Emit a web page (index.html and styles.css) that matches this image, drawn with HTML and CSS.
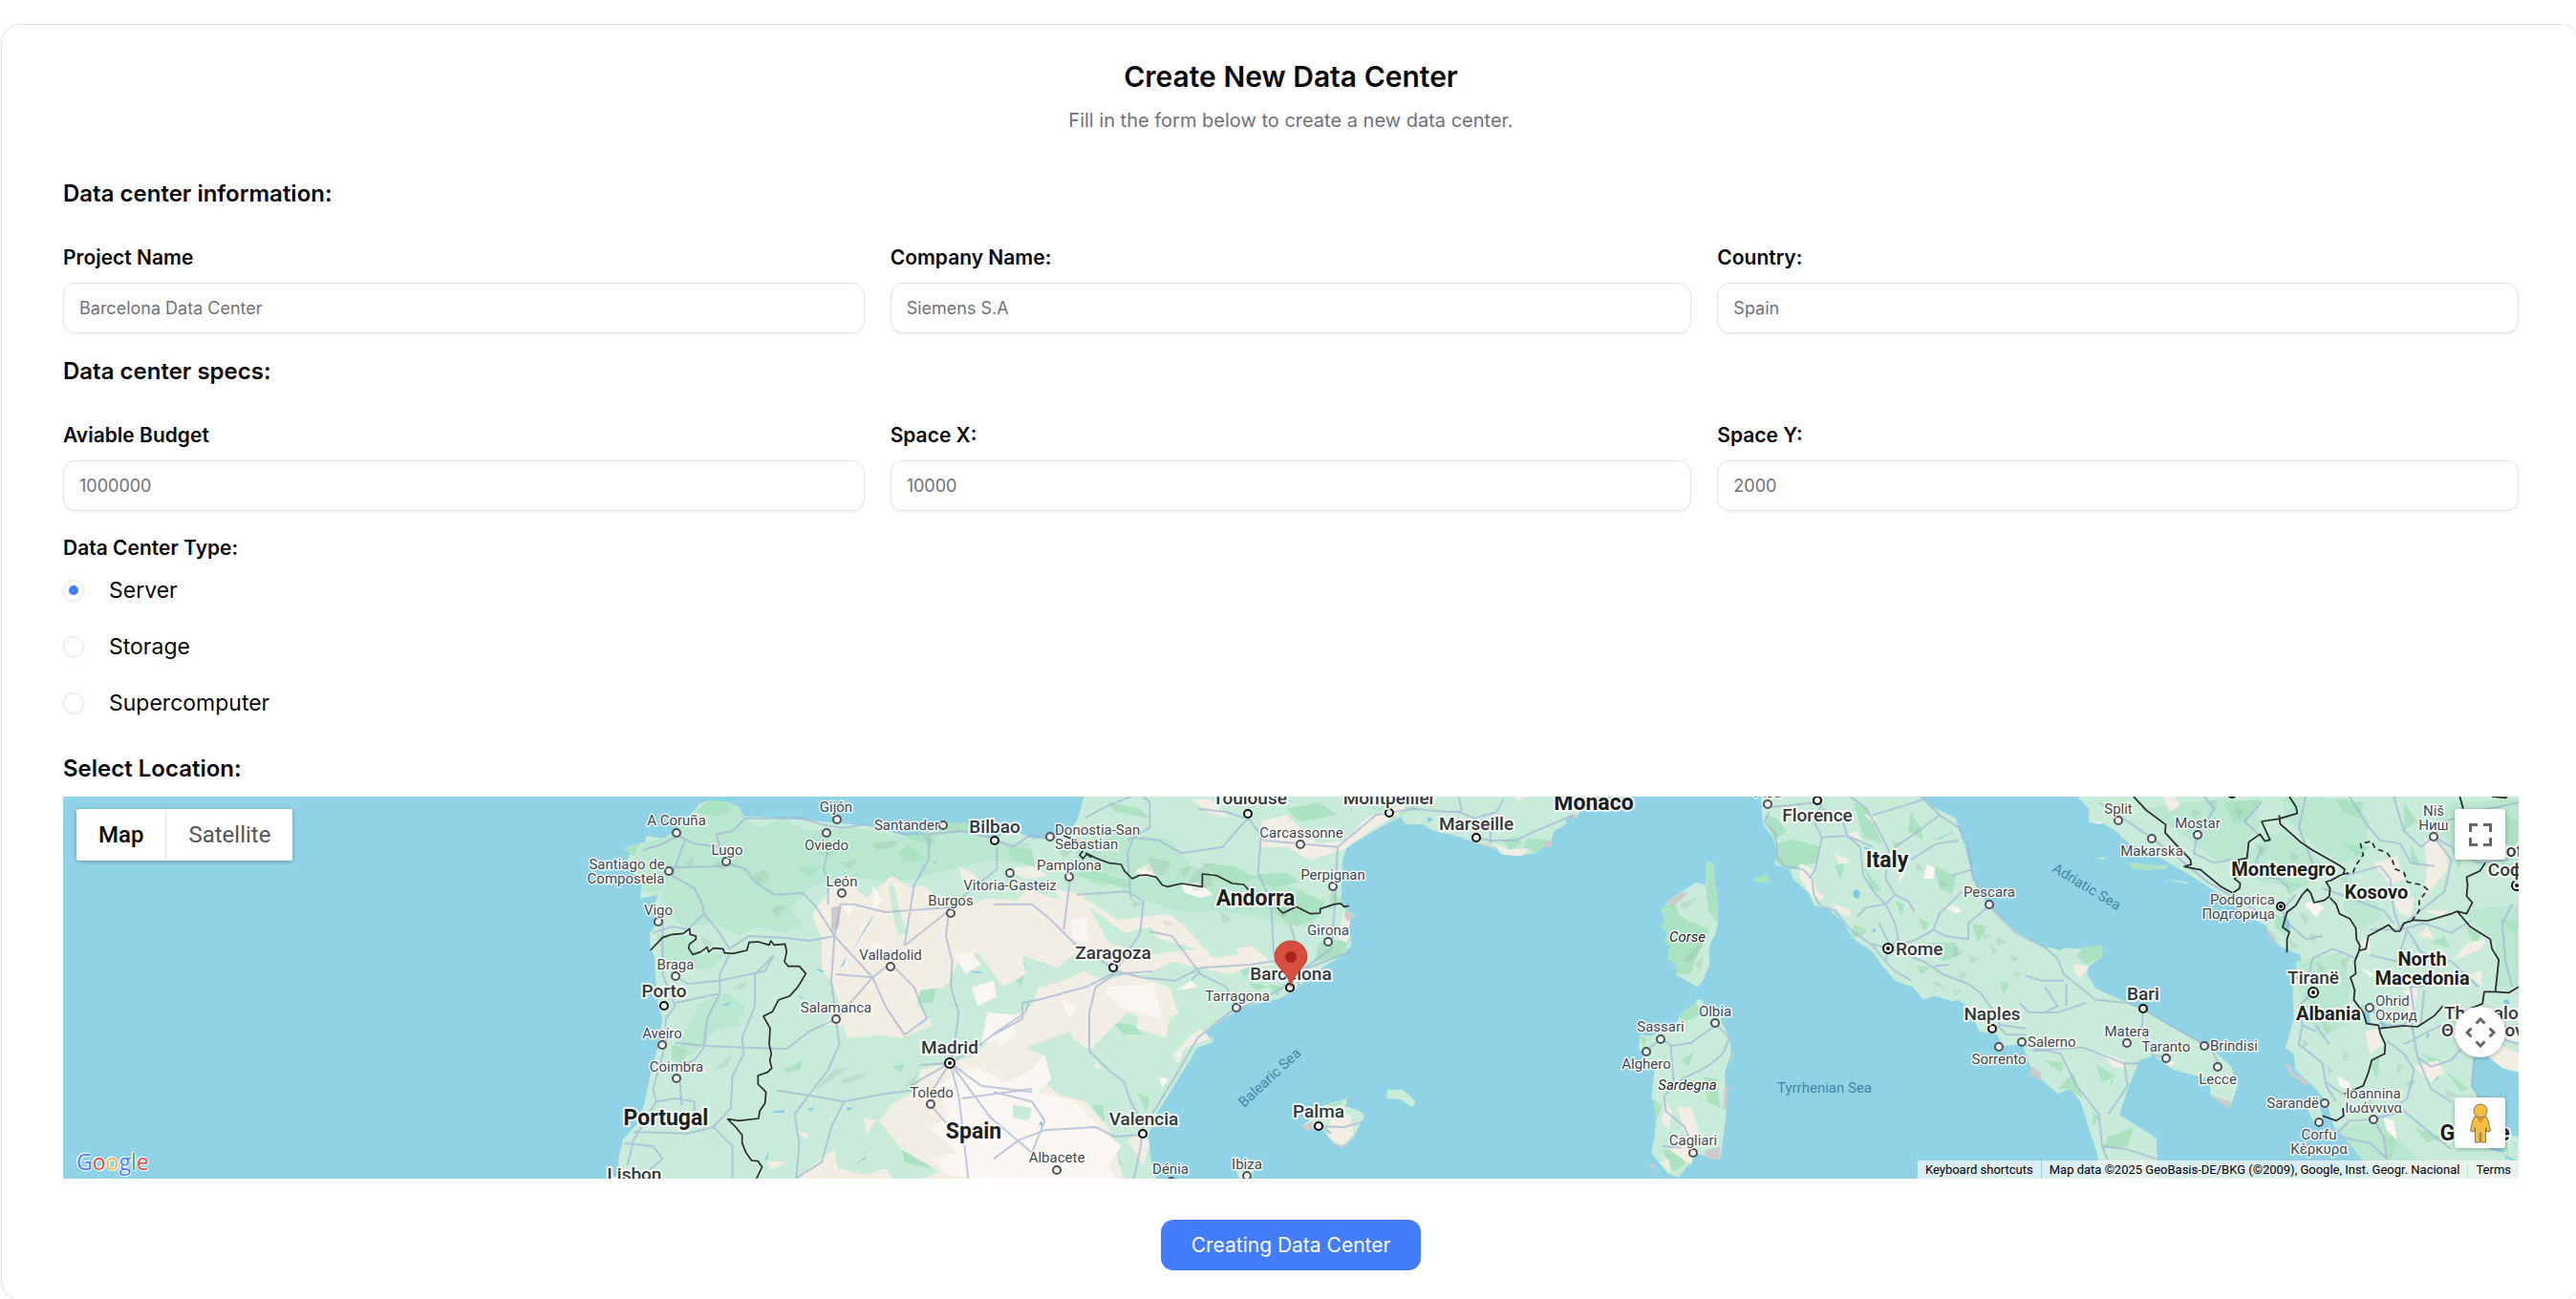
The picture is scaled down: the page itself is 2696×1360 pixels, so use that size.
FILE: index.html
```html
<!DOCTYPE html>
<html lang="en">
<head>
<meta charset="utf-8">
<meta name="viewport" content="width=device-width, initial-scale=1">
<title>Create New Data Center</title>
<link rel="stylesheet" href="styles.css">
</head>
<body>
<main class="card">
  <header class="card-header">
    <h1 class="title">Create New Data Center</h1>
    <p class="subtitle">Fill in the form below to create a new data center.</p>
  </header>
  <form class="form">
    <h2 class="section-title">Data center information:</h2>
    <div class="fields">
      <div class="field"><label class="label" for="project">Project Name</label><input class="input" id="project" type="text" placeholder="Barcelona Data Center"></div>
      <div class="field"><label class="label" for="company">Company Name:</label><input class="input" id="company" type="text" placeholder="Siemens S.A"></div>
      <div class="field"><label class="label" for="country">Country:</label><input class="input" id="country" type="text" placeholder="Spain"></div>
    </div>
    <h2 class="section-title">Data center specs:</h2>
    <div class="fields">
      <div class="field"><label class="label" for="budget">Aviable Budget</label><input class="input" id="budget" type="text" placeholder="1000000"></div>
      <div class="field"><label class="label" for="spacex">Space X:</label><input class="input" id="spacex" type="text" placeholder="10000"></div>
      <div class="field"><label class="label" for="spacey">Space Y:</label><input class="input" id="spacey" type="text" placeholder="2000"></div>
    </div>
    <fieldset class="types">
      <legend class="label">Data Center Type:</legend>
      <div class="type-list">
        <label class="type"><input class="radio" type="radio" name="type" checked>Server</label>
        <label class="type"><input class="radio" type="radio" name="type">Storage</label>
        <label class="type"><input class="radio" type="radio" name="type">Supercomputer</label>
      </div>
    </fieldset>
    <h2 class="section-title map-title">Select Location:</h2>
    <div class="map">
      <svg class="map-canvas" viewBox="66 834 2570 400" preserveAspectRatio="xMidYMid slice" role="img" aria-label="Map of the western Mediterranean">
        <!-- Iberia and southern France -->
        <g transform="translate(560 820) scale(.33333)">
          <path class="land" d="M262 1250V1180L275 1120 320 1070 345 1000 365 900 385 830 400 740 385 690 378 600 375 540 362 525 360 470 385 440 370 400 385 350 330 362 335 320 290 240 305 205 275 205 345 185 350 165 400 175 440 150 500 85 515 65 545 55 560 68 600 58 640 75 655 105 700 105 840 115 950 125 1060 135 1160 165 1240 155 1300 125 1350 140 1440 175 1500 145 1560 175 1620 170 1680 150 1705 110 1723 42V0H3300L3275 100 3240 105 3235 130 3200 150 3190 180 3140 220 3080 228 3030 220 3020 205 2950 185 2890 165 2820 150 2790 130 2730 128 2720 105 2660 135 2550 200 2535 240 2530 380 2550 400 2575 415 2555 435 2562 510 2530 545 2470 580 2390 645 2340 675 2220 705 2160 740 2100 790 2130 800 2125 815 2080 830 2050 880 2000 960 1950 1040 1925 1110 1935 1190 1955 1250Z"/>
          <path class="hill" d="M500 85 545 55 600 58 640 75 655 105 700 140 780 110 850 150 1000 140 1160 170 1300 130 1440 180 1550 190 1570 260 1440 240 1300 270 1200 300 1100 310 960 290 860 330 800 400 840 440 780 470 690 450 640 480 560 440 480 450 420 420 400 340 340 345 310 240 340 190 440 160ZM600 660 660 700 640 760 570 770 500 850 440 870 470 780 520 690ZM380 470 480 480 520 540 600 530 560 580 470 590 400 560ZM1800 140 2000 180 2060 260 2240 300 2400 330 2470 390 2440 450 2330 440 2260 420 2130 400 2010 400 1850 340 1780 240ZM1700 200 1800 220 1850 290 1780 330 1690 280ZM2600 60 2720 42 2760 80 2690 120ZM1430 390 1540 370 1560 470 1430 500Z"/>
          <path class="wood" d="M505 90 545 55 600 60 620 90 560 105ZM275 205 330 190 310 230ZM1160 165 1230 160 1250 180 1190 185ZM1290 130 1350 120 1380 150 1300 150ZM1480 200 1560 210 1570 260 1500 240ZM1350 420 1430 395 1510 400 1560 380V420L1500 430 1450 520 1400 510 1430 460ZM1480 580 1540 560 1530 620 1500 600ZM1550 970 1580 980 1580 1010 1555 1010ZM780 900 840 870 830 900 790 910ZM1120 890 1160 880 1150 910ZM1150 1140 1230 1180 1240 1210 1160 1190ZM1180 650 1260 640 1250 690 1190 690ZM860 170 950 190 930 230 880 215ZM1170 190 1230 240 1160 250 1140 220ZM820 270 900 260 860 290ZM430 820 480 840 460 880 430 870ZM1440 480 1490 470 1520 500 1450 520ZM1490 565 1540 570 1530 640 1500 610ZM1600 510 1640 500 1630 540ZM1700 640 1780 680 1770 700 1690 670ZM1810 750 1880 760 1910 790 1850 790ZM1750 1010 1780 1010 1790 1060 1750 1060ZM1660 1070 1710 1050 1710 1110 1680 1120ZM1890 970 1930 990 1920 1030ZM1810 1150 1840 1190 1820 1230ZM2360 80 2460 60 2520 100 2400 120ZM2090 250 2200 260 2260 300 2180 320ZM2300 390 2400 340 2480 370 2460 420 2390 450ZM2500 340 2540 370 2490 400ZM2240 290 2360 280 2400 310 2320 330ZM2460 500 2560 490 2530 545 2450 560ZM3040 180 3080 165 3100 190 3060 210ZM3120 170 3180 180 3140 220 3100 200ZM2240 620 2300 640 2260 650ZM2190 560 2250 580 2230 610ZM2300 630 2350 640 2330 670ZM1740 270 1870 310 1860 330 1700 290ZM1800 60 1900 80 1930 110 1820 90ZM2740 50 2780 60 2760 90Z"/>
          <path class="plain" d="M870 410 900 370 960 290 1040 360 1120 290 1180 330 1220 320 1300 400 1430 360 1510 370 1550 330 1620 360 1740 370 1830 430 1990 410 2040 450 2130 550 2240 530 2290 560 2180 600 2090 580 2000 560 1920 600 1850 600 1800 560 1700 530 1640 580 1530 540 1540 600 1470 640 1390 530 1330 560 1290 640 1210 650 1200 700 1250 760 1150 800 1080 790 980 800 970 760 900 760 960 700 930 620 900 590 900 490 880 440ZM1330 260 1370 280 1420 330 1350 340ZM1120 1010 1200 960 1210 900 1300 880 1370 860 1440 800 1500 730 1560 700 1580 640 1660 620 1720 590 1790 620 1870 600 1990 640 2020 720 1960 760 1860 720 1790 790 1740 840 1780 900 1720 880 1680 780 1620 800 1540 830 1600 860 1600 940 1650 980 1730 1000 1800 1080 1850 1250H1680L1600 1180 1430 1200 1400 1250H1200L1270 1220 1150 1150 1080 1060ZM1840 600 1920 610 1900 660 1860 640ZM820 1250 870 1200 940 1150 950 1210 1040 1230 1100 1210 1130 1250ZM1030 1050 1070 1060 1040 1100ZM820 1090 860 1100 850 1120ZM730 1185 790 1190 740 1215ZM2090 770 2120 800 2040 830 2020 880 2000 860 2050 800ZM1900 1090 1930 1130 1910 1200 1860 1120ZM2280 120 2360 100 2400 140 2460 190 2540 180 2610 110 2730 60V85L2620 150 2540 210 2430 240 2360 200 2280 200ZM2060 50 2120 50 2180 110 2110 90ZM2540 400 2560 430 2550 500 2520 490ZM2200 520 2250 510 2320 570 2250 580ZM1880 280 1930 250 1950 300ZM3010 190 3060 210 3120 205 3100 228 3040 225ZM1480 270 1560 260 1610 290 1540 300ZM1620 330 1720 350 1740 400 1680 390ZM1900 640 2000 700 1980 800 1890 770ZM3080 42H3110L3085 60Z"/>
          <path class="dry" d="M1320 540 1370 530 1400 570 1350 600ZM1370 640 1440 620 1450 670 1390 700ZM1420 720 1520 730 1480 800 1400 820ZM1290 930 1380 890 1480 940 1560 900 1600 850 1620 930 1580 970 1700 1000 1770 1080 1840 1140 1800 1200 1830 1250H1430L1300 1230 1240 1180 1330 1160 1240 1090 1300 1040 1260 960ZM1800 640 1940 630 1970 740 1850 710 1790 660ZM1680 430 1730 420 1740 500 1690 490ZM960 380 1000 370 990 420ZM1060 320 1090 370 1060 400ZM1040 520 1070 500 1110 520 1080 560ZM1440 780 1500 730 1510 790 1460 830ZM1650 680 1700 700 1680 740ZM2030 320 2080 310 2130 350 2090 360 2040 345ZM1960 920 1990 930 1970 955ZM1890 270 1930 280 1900 300ZM2010 650 2060 620 2080 640Z"/>
          <path class="land" d="M1110 310 1130 330 1150 420 1170 470 1140 480 1120 400ZM1280 620 1320 660 1300 690ZM1740 390 1850 470 1930 450 1960 490 2080 520 2000 530 1920 540 1800 500ZM1670 790 1770 860 1740 920 1700 870ZM1560 580 1640 600 1600 640 1560 620ZM1500 1010 1560 1020 1550 1060 1500 1050Z"/>
          <path class="rock" d="M930 390 960 385 955 450 930 470ZM2545 400 2575 415 2555 435 2540 420ZM2640 100 2650 98ZM2950 185 3020 203 3015 208 2950 190ZM3170 182 3192 178 3192 200 3168 202ZM3245 100H3275V108H3240Z"/>
          <path class="shade" d="M560 250 600 240 640 260 580 270ZM680 290 720 270 740 300 700 320ZM890 160 920 190 900 215ZM1060 190 1140 180 1130 200 1070 210ZM740 400 760 380 790 390 760 420ZM960 930 1040 910 1030 925 970 945ZM880 960 940 900 990 890 900 950ZM560 900 620 850 600 890ZM1930 230 2000 250 1970 290 1920 270ZM2050 300 2110 250 2130 320 2070 340ZM2250 330 2310 350 2290 380ZM2020 270 2060 260 2040 300ZM2150 400 2190 430 2160 440ZM2330 400 2380 390 2350 430ZM960 250 1010 240 990 270ZM520 480 560 500 540 530ZM470 250 500 230 490 270ZM620 640 670 620 650 650ZM1640 200 1690 210 1660 240ZM1870 360 1910 380 1880 390ZM1970 430 2010 440 1980 450ZM1160 950 1210 900 1180 960ZM920 180 970 200 940 220ZM1220 160 1260 190 1230 200Z"/>
          <path class="lake" d="M995 525 1065 408 1050 440 1000 520ZM955 583 978 545 970 570ZM875 580 910 590 900 595ZM1250 245 1265 248 1252 252ZM735 1035 780 1025 785 1035ZM720 1185 735 1155 730 1180ZM1000 1200 1035 1175 1037 1155V1180ZM855 1022 880 1018 865 1030ZM975 1020 1000 1018 985 1028ZM585 697 620 685 600 700ZM470 712 495 685ZM1360 590 1410 592 1390 597ZM830 665 845 680 832 675ZM2800 105 2820 115 2805 122ZM1580 1075 1590 1060 1595 1075Z"/>
          <path class="road" d="M340 210 400 190 450 165 500 190 580 200 570 160 620 150 660 110 840 110 900 130 960 140 1040 130 1160 160 1240 160 1340 150 1440 175 1500 200 1560 160 1620 180 1660 140M470 180 430 290 500 330 525 380 530 410 580 470 610 520 670 480 780 485 860 495 940 480 960 380 1000 380 1100 405 1300 390 1450 270 1450 200M600 250 660 270 690 310 750 350 840 345 880 385 940 480 1060 610 1110 570M430 265 600 260M920 210 905 270 920 300V380M940 480 930 620 945 740M1240 160 1235 240 1190 320 1160 510M1300 400 1160 510M1300 400 1290 480 1310 560 1305 640 1330 720 1320 800 1303 878M1060 610 945 740 860 780 790 835 660 830 540 825 440 815M1060 610 1100 700 1160 790 1230 740 1190 640 1120 570M945 740 955 820 920 900 860 980 815 1040 830 1130 820 1242M945 600 1060 610M400 420V600L440 700 410 740 410 820 370 960 380 1000 310 1120 290 1200M370 470 430 450 480 460 530 410M430 600 480 630 580 620 720 590 750 540M440 690 580 660 580 600 610 540M750 540 690 600 690 700 650 800 655 850 620 920 615 1020 560 1080 480 1100 310 1095M580 660 540 740 530 830 500 870 430 900M380 1000 440 990 500 1000 500 1050M455 940 460 1010M280 1130 370 1140 400 1180 330 1240M560 1080 620 1140 620 1240M860 980 970 1000 1100 975 1180 965M760 965 860 980M970 1000 930 1080 900 1190 820 1240M1303 878 1230 920 1180 950M1303 878 1400 820 1450 780 1540 720 1550 690M1303 878 1400 950 1560 970M1303 878 1250 960M1303 878 1210 885M1303 878 1330 980 1360 1240M1303 878 1430 1050 1560 1160 1600 1060 1560 1000 1440 970M1340 990 1560 960M1240 1010 1320 1100M1440 1180 1520 1120 1600 1090 1760 1080 1820 1110 1900 1105M1940 590 1820 600 1760 640 1740 720 1740 840 1800 900 1850 940 1870 1000 1910 1070 1900 1150 1880 1242M1440 380 1560 380 1620 430 1700 510 1830 590 1900 610 2010 620 2090 580 2240 570 2400 550M1680 300 1660 460M1830 580 1900 470 1910 370 1860 340 1700 350M1830 590 1730 640 1580 680 1530 690 1530 740 1440 790M1930 465 2000 480 2060 560 2090 600 2170 640 2200 700M2090 590 2060 620M2560 530 2400 590 2350 640 2280 680 2180 720 2080 800 2040 870 1950 1020 1910 1080M2400 640 2390 600 2500 520 2510 400 2520 200 2400 190 2290 180 2240 110 2210 140 2160 200 2030 220 1960 180 1880 170 1860 220 1870 360M1725 110 1800 70 1900 30 1930 60 1930 140 1860 180M2230 110 2170 90 2080 80M2280 160 2270 280 2310 370 2320 540M2370 440 2400 540M2520 200 2640 100 2760 80 2860 90 2900 90 2950 110 3020 90 3040 50M2910 90 2900 42M2955 170 3000 180 3080 180 3140 150 3190 130 3260 100M3000 120 3000 190"/>
          <path class="border" d="M362 525 400 485 430 475 465 472 485 457 487 475 505 480V490L485 505 482 518 495 538 520 530 540 515 545 530 560 518 590 520 595 533 620 535 665 525 672 500 700 498 735 508 740 495 750 508 785 505 790 530 783 560 795 575 830 575 850 598 825 640 800 668 765 680 745 718 717 732 738 770 735 820 742 850 737 870 743 895 730 908 700 918V945L725 970 722 1005 705 1030 702 1053 640 1060 605 1055 630 1080 650 1105V1130L662 1160 680 1185 700 1187 713 1205 695 1242"/>
          <path class="border" d="M1660 165 1700 180M1720 212 1710 225 1720 237 1733 222 1745 232 1730 220 1760 235 1800 250 1840 255 1850 275 1875 300 1895 290 1920 288 1950 295 1970 320 1985 325 2030 315 2095 325V285L2140 290 2190 315 2225 318 2240 335M2330 390 2348 408 2375 395 2390 388 2435 410 2465 408V395L2510 380 2530 378 2540 388 2555 385"/>
        </g>
        <!-- Balearic islands -->
        <g transform="translate(1040 820) scale(.33333)">
          <path class="land" d="M965 1080 1040 1010 1110 990 1105 1015 1150 1030 1165 1045 1130 1110 1095 1145 1065 1130 1035 1090 1000 1090ZM1235 962H1285L1325 1000 1315 1018 1275 993 1235 990ZM760 1215 820 1210 810 1242H770Z"/>
          <path class="plain" d="M1060 1050 1120 1040 1130 1100 1095 1140 1050 1110ZM770 1225 810 1215 800 1242H780Z"/>
          <path class="wood" d="M1040 1015 1100 993 1060 1030ZM675 795 692 800 690 815Z"/>
          <path class="rock" d="M965 1080 1000 1060 1010 1090 990 1092ZM1065 1130 1095 1148 1125 1120 1095 1138Z"/>
          <path class="road" d="M1030 1078 1100 1080 1155 1065M1030 1080 1060 1100"/>
        </g>
        <!-- Corsica, Sardinia and Italy -->
        <g transform="translate(1660 820) scale(.33333)">
          <path class="land" d="M380 245 400 250 403 310 415 370 412 450 385 520 388 570 365 620 350 640 280 600 285 575 255 550 265 510 245 505 255 470 235 450 250 430 235 400 270 360 345 312 375 320ZM345 680H365L370 700 420 720 425 750 450 800 455 850 435 910 440 1030 430 1120 420 1180 330 1160 320 1200 290 1238 255 1225 205 1160 215 1110 220 1040 230 1010 205 990 215 900 190 870 165 830 170 790 200 795 280 760 300 720 345 705Z"/>
          <path class="land" d="M548 30 555 125 590 180 600 225 590 255 640 270 650 300 700 345 715 385 760 395 810 440 835 485 900 530 920 560 970 620 1025 640 1060 680 1095 668 1150 685 1170 680 1205 710 1235 780 1290 790 1310 825 1370 820 1395 890 1430 930 1480 975 1520 960 1552 1000 1600 1150 1610 1185 1605 1250H1796L1791 1115 1727 1075 1674 1040 1701 960 1738 870 1780 855 1844 900 1956 930 1961 980 2020 1022 2046 950 2025 890 1961 830 1855 775 1749 710 1600 645 1573 600 1578 575 1621 545 1610 510 1550 520 1440 515 1350 465 1265 385 1215 300 1190 200 1160 110 1090 75 1040 30Z"/>
          <path class="wood" d="M380 245 400 250 403 310 415 370 412 440 385 400 375 340ZM250 380 290 380 320 430 390 460 340 560 330 600 280 600 285 575 255 550 265 510 245 505 255 470 235 450 250 430 235 400ZM520 300 570 285 577 315 530 308ZM300 720 345 690 370 720 290 760ZM370 920 410 930 420 1020 380 1000ZM210 1000 240 1010 220 1060ZM240 1150 305 1160 310 1200 270 1220ZM300 870 340 845 320 890ZM600 190 650 175 700 190 735 200 720 250 640 270 595 250ZM560 100 600 110 630 150 590 180ZM840 440 880 460 870 480 830 485ZM780 260 810 250 800 305ZM870 260 930 340 900 340ZM840 60 880 80 930 190 870 170ZM1090 260 1160 290 1150 350 1110 330ZM1020 90 1050 140 1060 180 1010 150ZM1070 500 1160 500 1170 540 1120 560ZM1040 420 1080 440 1060 465ZM1040 570 1080 580 1050 600ZM1210 440 1260 450 1230 500ZM1300 620 1330 630 1310 665ZM970 370 1000 380 990 420ZM1480 960 1530 910 1560 990 1510 960ZM1440 870 1500 880 1490 910ZM1560 515 1621 510 1621 545 1570 570 1540 540ZM1590 1030 1610 1050 1590 1080ZM1640 1110 1720 1080 1700 1140 1620 1150ZM1600 880 1660 920 1620 940ZM165 790 190 800 180 830Z"/>
          <path class="land" d="M280 360 340 330 380 340 370 400 330 440 290 410ZM385 450 412 440 405 480 380 500ZM320 600 370 580 360 630Z"/>
          <path class="plain" d="M250 1005 270 1030 260 1090 235 1060ZM285 1015 330 1020 355 1100 330 1200 260 1150 320 1130ZM230 1190 260 1180 265 1220ZM670 250 710 270 720 330 750 360 720 370 690 330 670 290ZM780 220 825 240 820 255 790 250ZM770 375 830 400 830 420 800 410ZM820 160 850 150 870 190 840 180ZM870 95 910 110 905 130ZM990 260 1000 290 980 310ZM1115 380 1165 390 1180 405 1150 405ZM1530 570 1550 570 1560 610 1535 600ZM1530 570 1580 575 1550 610ZM1625 850 1690 870 1690 895 1650 890ZM1815 860 1850 880 1830 890Z"/>
          <path class="dry" d="M1070 255 1095 265 1090 300 1060 300ZM1145 385 1180 400 1160 410Z"/>
          <path class="rock" d="M255 370 310 340 320 345 270 390ZM370 1155 420 1140 418 1182 385 1180ZM435 950 447 955 438 1020 430 1030ZM455 840 465 855 450 880ZM1400 890 1428 910 1430 935 1392 915ZM200 1190 218 1200 210 1220ZM1960 980 2020 1022 2025 1000Z"/>
          <path class="shade" d="M290 380 350 360 310 400ZM300 560 380 480 330 560ZM340 570 370 540 360 590ZM1160 510 1190 530 1150 550ZM1200 540 1240 550 1210 570ZM1290 480 1320 500 1290 510ZM1090 620 1130 640 1100 640ZM1150 650 1180 650 1160 670ZM1170 590 1200 600 1180 615ZM1330 540 1360 550 1340 560ZM1270 500 1290 530 1270 540ZM1340 590 1370 600 1350 610ZM1240 470 1270 480 1250 490ZM1110 300 1140 320 1110 330ZM1030 240 1060 270 1040 280ZM960 180 990 190 970 210Z"/>
          <path class="lake" d="M838 340 850 332 862 345 855 362 840 358ZM868 200 895 203 880 210ZM895 462 910 455 908 470ZM1090 180 1165 145 1110 175ZM1460 515 1500 515 1490 525Z"/>
          <path class="road" d="M575 90 560 120 595 160 600 230 620 260 680 270 710 300 715 350 735 385 780 400 830 460 900 510 940 560 970 590 1020 620M570 75 640 70 720 60 740 70 710 110 740 170 820 165 900 200M740 170 720 270 700 300M740 80 800 100 820 165 860 200 870 290 910 350 940 380 970 440 980 490 949 519M830 42 880 80 920 150 950 210 940 300 970 350 1010 370 1030 400M900 100 1000 70 1060 50M1050 42 1110 100 1170 140 1200 200 1215 300 1265 385 1350 470 1440 515 1480 550 1500 600 1600 680 1700 690 1749 710M1110 100 1030 160 970 200M1170 180 1100 190 1020 240M1215 270 1150 290M850 420 880 390 940 380 970 350M949 519 1040 490 1090 460 1110 410 1180 340M1090 460 1130 480 1200 490 1200 440 1265 385M949 519 1060 560 1120 600 1200 630 1240 660 1275 710 1300 760 1380 770M949 519 940 560M900 505 949 519M920 440 950 500M1090 575 1140 570M1380 605 1430 620 1500 620M1508 630V700M1360 690 1390 720 1480 720 1570 690M1380 790 1320 790 1290 760M1370 820 1400 830 1490 850 1540 950 1610 1040 1620 1140 1660 1240M1400 840 1560 830 1690 880 1738 880M1749 710 1745 770 1780 855 1840 860M1749 710 1850 770 1960 830 1990 890M1440 640 1480 700 1440 720M1690 880 1700 950 1640 1040M1620 1140 1700 1150 1790 1180M405 754 450 800 430 850 380 890 300 930 245 980 250 1030 310 1080 337 1150M234 803 270 825 330 815 400 765M234 803 190 840M265 820 275 940M240 1140 300 1145"/>
        </g>
        <!-- Balkans -->
        <g transform="translate(2140 820) scale(.35461 .33333)">
          <path class="land" d="M85 30 130 80V120L170 125 210 150 250 190 350 240 430 290 520 350 600 420 650 445 690 510 755 540V560L730 600 735 740 710 830 735 850 740 900 800 960 830 1000 855 1080 900 1130 950 1185 980 1250H1410V30Z"/>
          <path class="land" d="M215 150 285 155 290 180 230 175ZM250 250 300 255 370 260 350 270 260 265ZM350 300 430 318 420 310ZM150 235 180 232 175 240ZM775 1020 810 1000 820 1050 800 1080Z"/>
          <path class="hill" d="M290 80 430 60 560 42 620 90 640 130 590 180 600 240 500 240 430 180 350 120ZM700 42 900 50 960 120 940 230 880 250 800 200 710 110ZM640 180 700 150 780 210 830 260 760 330 640 310 580 240ZM1200 60 1399 50V260L1280 260 1200 200 1150 120ZM1230 400 1399 380V640H1340L1330 500ZM740 560 880 530 900 640 890 760 810 800 760 700ZM900 300 960 340 1000 420 930 460 880 390ZM860 1080 1000 1060 1100 1180 1240 1200 1300 1242H980Z"/>
          <path class="wood" d="M530 60 640 50 600 110 560 130ZM860 50 940 60 930 110 880 90ZM880 190 960 200 920 230ZM600 250 640 260 630 300ZM1060 60 1100 120 1060 150ZM1200 200 1240 220 1220 270ZM700 300 760 320 720 350ZM1080 190 1110 260 1080 250ZM1140 500 1180 480 1200 520ZM1240 450 1290 470 1270 510ZM1360 100 1399 120 1390 200 1360 190ZM1340 420 1399 440 1390 480ZM1110 850 1170 870 1150 890ZM1180 900 1250 960 1230 970ZM1000 1100 1040 1120 1020 1190ZM1090 1080 1170 1110 1130 1130ZM960 880 990 860 980 930ZM240 1050 250 1060ZM1340 1120 1390 1130 1390 1180 1350 1150ZM770 700 800 680 790 750ZM670 400 720 440 710 480 680 450ZM250 250 370 262 300 275 255 268Z"/>
          <path class="plain" d="M350 42H380L400 70 370 90ZM130 120 170 120 165 130ZM970 250 1040 230 1060 300 1020 320ZM1120 170 1180 200 1190 270 1150 320 1110 370 1130 270ZM930 500 960 480 960 540ZM1120 400 1190 400 1170 420ZM1100 480 1130 450 1150 490ZM1200 560 1250 500 1300 490 1290 520ZM1060 650 1100 640 1090 740 1060 780 1070 700ZM945 780 980 770 1000 820 960 850ZM1090 890 1160 870 1180 910 1140 940ZM1250 600 1290 590 1290 640ZM1270 870 1310 800 1360 830 1399 850V910L1350 895 1310 860 1320 830ZM1030 370 1090 360 1080 420 1050 410ZM1280 760 1399 790V810H1290Z"/>
          <path class="dry" d="M765 380 790 370 825 390 800 420ZM865 920 900 940 910 970 870 950ZM1000 1050 1030 1060 1040 1120 1010 1090ZM935 580 970 600 960 610Z"/>
          <path class="sea" d="M1265 850 1260 950 1280 990 1310 1100 1310 1150 1350 1160 1399 1190H1410V910L1350 895 1310 860ZM1340 1100 1399 1110V1190L1360 1180Z"/>
          <path class="land" d="M1360 1110 1385 1130 1393 1170 1370 1175Z"/>
          <path class="rock" d="M708 880 720 880 735 910 780 940 770 950 725 915ZM650 450 680 480 690 510 665 480Z"/>
          <path class="lake" d="M945 715 958 720 960 755 945 750ZM985 745 1010 755 1000 775ZM1145 940 1165 915 1160 930ZM700 415 720 430 725 470 710 455ZM1085 340 1100 360 1095 350ZM1355 680H1370V700H1355ZM1125 790 1135 785 1130 805ZM195 930 200 935 197 945Z"/>
          <path class="shade" d="M480 60 510 50 500 90ZM560 70 590 90 570 110ZM430 80 460 90 440 110ZM620 190 660 200 640 230ZM660 270 690 300 670 290ZM720 210 750 230 730 250ZM780 470 810 480 790 500ZM750 400 780 420 770 450ZM820 620 850 600 840 640ZM870 560 900 540 890 590ZM830 880 850 900 840 920ZM880 840 900 860 880 870ZM980 620 1010 600 1020 640ZM1040 880 1060 890 1040 910ZM760 800 780 820 760 830ZM930 700 960 690 940 720ZM1180 960 1220 980 1190 990ZM1190 600 1230 620 1200 640ZM820 750 850 770 830 790ZM950 1000 970 990 960 1030ZM1310 70 1350 90 1320 110ZM1270 140 1300 150 1280 170ZM870 300 890 290 900 330ZM720 490 750 510 730 520ZM1060 940 1100 930 1080 960ZM800 560 830 580 810 600Z"/>
          <path class="road" d="M160 60 230 110 300 160 400 240 480 310 560 360 640 410M450 160 440 220 500 250 550 240M450 160 500 80 470 42M640 170 590 120 640 60M770 42 750 140 790 250 850 300M900 42 950 130 990 180 1050 190 1080 250 1150 260M1030 42 1060 150 1110 200 1148 168M1148 168 1180 120 1270 90 1399 60M1148 168 1200 240 1180 340 1110 400 1050 450M890 290 990 260 1020 300 1030 400 1050 460M820 330 900 360 1000 400 1030 440M1148 168 1280 250 1370 240M1050 460 960 460M1050 460 1120 440 1200 470 1260 430M1070 460 1110 530 1200 560 1280 640M1070 460 1040 560 960 540M1380 380 1350 440 1360 560 1380 640M740 350 700 400 720 440 770 490 820 480M793 657 780 600 790 550 850 520 920 550M793 657 750 700 760 760 750 820 820 880 830 950 860 1000M760 760 800 780M770 600 730 620M800 760 840 820M960 700 1000 760 1060 760 1090 720 1080 640 1200 630M1080 740 1100 860 1140 890 1200 870 1280 770 1399 760M1010 810 1060 850 1090 900 1070 990 1020 1030M970 1056 900 1060 860 1100M970 1056 1060 1030 1140 1100 1200 1150M970 1056 1000 1110 1010 1180M1100 860 1140 960 1200 1000M1270 840 1260 950 1290 1000M830 940 900 990M1060 820 1170 760M1120 650 1110 760M610 290 690 300 720 330M640 200 610 290M1290 780 1399 820M590 440 550 390M1060 1030 980 1050M870 1110 960 1130 1010 1180"/>
          <path class="border" d="M262 42 300 85 357 130 355 155 385 190 430 240 432 255 412 262 460 272 520 325 555 345 575 330 577 315 560 300 575 285 572 240 597 235 602 185 635 160 650 182 665 178 640 120 690 112 745 95 742 75 722 42M692 100 695 128 755 185 790 210 870 258 885 270 882 285 870 290 845 305 830 310 842 330 840 355 825 368 795 375 785 345 775 332 760 350 740 385 715 405 702 452 722 468 715 490 715 532M842 360 860 380 870 410 900 425 918 455 920 490 930 510 928 525 915 560 918 598 902 610 915 650 912 680 940 720 950 755 985 760 990 785 1005 820 1003 850 965 870 955 910 940 950 885 975M880 1020 882 1045 860 1060 820 1045M930 525 948 520 955 480 1015 445 1033 465 1048 465 1060 440 1090 430 1130 432 1200 410 1217 402 1255 450 1315 490 1320 520 1340 555 1330 655M1217 402 1245 410 1262 375 1245 355 1248 320 1245 295 1285 275 1300 250M1330 655 1370 658 1399 640M1330 655 1297 655 1292 692 1230 720 1175 700 1150 730 1100 765 1060 762 990 770M1225 42 1235 80M1320 42 1360 46 1365 42"/>
          <path class="border disputed" d="M882 285 910 280 920 255 940 225 932 190 965 182 975 205 1010 218 1025 240 1035 270 1060 280 1070 310 1115 320 1130 335 1105 370 1105 400 1085 430"/>
        </g>
        <g class="seas">
          <text transform="translate(1302 1160) rotate(-43)">Balearic Sea</text>
          <text x="1860" y="1144">Tyrrhenian Sea</text>
          <text transform="translate(2147 912) rotate(31)">Adriatic Sea</text>
        </g>
        <g class="dots">
          <circle cx="708" cy="872" r="4"/><circle cx="876" cy="858" r="4"/><circle cx="865" cy="872" r="4"/><circle cx="987" cy="864" r="4"/><circle cx="760" cy="902" r="4"/><circle cx="700" cy="912" r="4"/><circle cx="881" cy="935" r="4"/><circle cx="1057" cy="914" r="4"/><circle cx="995" cy="956" r="4"/><circle cx="689" cy="965" r="4"/><circle cx="932" cy="1012" r="4"/><circle cx="707" cy="1022" r="4"/><circle cx="875" cy="1067" r="4"/><circle cx="693" cy="1094" r="4"/><circle cx="708" cy="1129" r="4"/><circle cx="974" cy="1156" r="4"/><circle cx="1099" cy="876" r="4"/><circle cx="1119" cy="918" r="4"/><circle cx="1361" cy="884" r="4"/><circle cx="1395" cy="928" r="4"/><circle cx="1390" cy="986" r="4"/><circle cx="1294" cy="1055" r="4"/><circle cx="1106" cy="1225" r="4"/><circle cx="1226" cy="1237" r="4"/><circle cx="1305" cy="1231" r="4"/><circle cx="1850" cy="842" r="4"/><circle cx="2082" cy="947" r="4"/><circle cx="1795" cy="1071" r="4"/><circle cx="1738" cy="1088" r="4"/><circle cx="1723" cy="1101" r="4"/><circle cx="1772" cy="1207" r="4"/><circle cx="2116" cy="1091" r="4"/><circle cx="2092" cy="1096" r="4"/><circle cx="2217" cy="859" r="4"/><circle cx="2300" cy="874" r="4"/><circle cx="2252" cy="878" r="4"/><circle cx="2547" cy="876" r="4"/><circle cx="2480" cy="1055" r="4"/><circle cx="2226" cy="1092" r="4"/><circle cx="2267" cy="1108" r="4"/><circle cx="2307" cy="1095" r="4"/><circle cx="2321" cy="1117" r="4"/><circle cx="2433" cy="1155" r="4"/><circle cx="2427" cy="1175" r="4"/><circle cx="2484" cy="1172" r="4"/>
        </g>
        <g class="dots big">
          <circle cx="1041" cy="880" r="4"/><circle cx="695" cy="1053" r="4"/><circle cx="1306" cy="852" r="4"/><circle cx="1454" cy="851" r="4"/><circle cx="1545" cy="877" r="4"/><circle cx="1165" cy="1013" r="4"/><circle cx="1350" cy="1034" r="4"/><circle cx="1380" cy="1179" r="4"/><circle cx="1196" cy="1187" r="4"/><circle cx="1902" cy="838" r="4"/><circle cx="2085" cy="1077" r="4"/><circle cx="2243" cy="1056" r="4"/>
        </g>
        <g class="capitals">
          <circle cx="994" cy="1113" r="5"/><circle cx="1976" cy="993" r="5"/><circle cx="2387" cy="949" r="4"/><circle cx="2421" cy="1039" r="5"/><circle cx="2634" cy="927" r="5"/><circle cx="2336" cy="831" r="4"/>
        </g>
        <g class="cores">
          <circle cx="994" cy="1113" r="2"/><circle cx="1976" cy="993" r="2"/><circle cx="2387" cy="949" r="2"/><circle cx="2421" cy="1039" r="2"/><circle cx="2634" cy="927" r="2"/>
        </g>
        <g class="names town">
          <text x="708" y="864">A Coruña</text><text x="875" y="850">Gijón</text><text x="865" y="890">Oviedo</text><text x="949" y="869">Santander</text><text x="761" y="895">Lugo</text><text x="656" y="910">Santiago de</text><text x="655" y="925">Compostela</text><text x="881" y="928">León</text><text x="1057" y="932">Vitoria-Gasteiz</text><text x="995" y="948">Burgos</text><text x="689" y="958">Vigo</text><text x="932" y="1005">Valladolid</text><text x="707" y="1015">Braga</text><text x="875" y="1060">Salamanca</text><text x="693" y="1087">Aveiro</text><text x="708" y="1122">Coimbra</text><text x="975" y="1149">Toledo</text><text class="start" x="1104" y="874">Donostia-San</text><text class="start" x="1104" y="889">Sebastian</text><text x="1119" y="911">Pamplona</text><text x="1362" y="877">Carcassonne</text><text x="1395" y="921">Perpignan</text><text x="1390" y="979">Girona</text><text x="1295" y="1048">Tarragona</text><text x="1106" y="1217">Albacete</text><text x="1225" y="1229">Dénia</text><text x="1305" y="1224">Ibiza</text><text x="1850" y="835">Pisa</text><text x="2082" y="939">Pescara</text><text class="region" x="1766" y="986">Corse</text><text x="1795" y="1064">Olbia</text><text x="1738" y="1080">Sassari</text><text x="1723" y="1119">Alghero</text><text class="region" x="1766" y="1141">Sardegna</text><text x="1772" y="1199">Cagliari</text><text class="start" x="2122" y="1096">Salerno</text><text x="2092" y="1114">Sorrento</text><text x="2217" y="852">Split</text><text x="2300" y="867">Mostar</text><text x="2252" y="896">Makarska</text><text x="2547" y="854">Niš</text><text x="2547" y="869">Ниш</text><text class="end" x="2381" y="947">Podgorica</text><text class="end" x="2381" y="962">Подгорица</text><text class="start" x="2486" y="1053">Ohrid</text><text class="start" x="2486" y="1068">Охрид</text><text x="2226" y="1085">Matera</text><text x="2267" y="1101">Taranto</text><text class="start" x="2313" y="1100">Brindisi</text><text x="2321" y="1135">Lecce</text><text class="end" x="2427" y="1160">Sarandë</text><text x="2427" y="1193">Corfu</text><text x="2427" y="1208">Κέρκυρα</text><text x="2484" y="1150">Ioannina</text><text x="2484" y="1165">Ιωάννινα</text>
        </g>
        <g class="names city">
          <text x="1041" y="872">Bilbao</text><text x="695" y="1044">Porto</text><text x="994" y="1103">Madrid</text><text x="664" y="1236">Lisbon</text><text x="1308" y="842">Toulouse</text><text x="1454" y="842">Montpellier</text><text x="1545" y="869">Marseille</text><text x="1165" y="1004">Zaragoza</text><text x="1351" y="1026">Barcelona</text><text x="1380" y="1170">Palma</text><text x="1197" y="1178">Valencia</text><text x="1902" y="860">Florence</text><text class="start" x="1984" y="1000">Rome</text><text x="2085" y="1068">Naples</text><text x="2421" y="1030">Tiranë</text><text x="2243" y="1047">Bari</text><text x="2633" y="897">Sofia</text><text x="2633" y="917">София</text><text class="start" x="2558" y="1067">Thessaloniki</text><text class="start" x="2555" y="1085">Θεσσαλονίκη</text>
        </g>
        <g class="names country">
          <text x="697" y="1178">Portugal</text><text x="1019" y="1192">Spain</text><text x="1668" y="848">Monaco</text><text x="1314" y="948">Andorra</text><text x="1975" y="908">Italy</text><text x="2590" y="1194">Greece</text>
        </g>
        <g class="names country small">
          <text x="2390" y="917">Montenegro</text><text x="2487" y="941">Kosovo</text><text x="2535" y="1011">North</text><text x="2535" y="1031">Macedonia</text><text x="2437" y="1068">Albania</text>
        </g>
        <g>
          <path class="pin" d="M1351 1033C1350 1020 1334 1012 1334 1002A17 17 0 0 1 1368 1002C1368 1012 1352 1020 1351 1033Z"/>
          <circle class="pin-core" cx="1351" cy="1002" r="6"/>
        </g>
      </svg>
      <div class="map-types">
        <button class="map-type active" type="button">Map</button>
        <button class="map-type" type="button">Satellite</button>
      </div>
      <button class="control fullscreen" type="button" aria-label="Toggle fullscreen view">
        <svg width="24" height="24" viewBox="0 0 24 24"><path fill="#666" d="M0 0H9V3H3V9H0ZM15 0H24V9H21V3H15ZM0 15H3V21H9V24H0ZM21 15H24V24H15V21H21Z"/></svg>
      </button>
      <button class="control camera" type="button" aria-label="Map camera controls">
        <svg width="32" height="32" viewBox="0 0 32 32"><path fill="none" stroke="#666" stroke-width="3" d="M11.500 6.500 16 2l4.500 4.500M11.500 25.500 16 30l4.500-4.500M6.500 11.500 2 16l4.500 4.500M25.500 11.500 30 16l-4.500 4.500"/></svg>
      </button>
      <button class="control pegman" type="button" aria-label="Street View">
        <svg width="24" height="42" viewBox="0 0 24 42"><g fill="#f5bf42" stroke="#85714d"><path d="M6 14H18L20 18 22.500 29 19 30 17.500 25V41H12.700V31H11.300V41H6.500V25L5 30 1.500 29 4 18Z"/><circle cx="12" cy="8" r="7"/></g><path fill="#d98a3a" d="M8 15H16L12 21Z"/></svg>
      </button>
      <a class="logo" href="#maps" aria-label="Google"><span class="g-blue">G</span><span class="g-red">o</span><span class="g-yellow">o</span><span class="g-blue">g</span><span class="g-green">l</span><span class="g-red">e</span></a>
      <div class="credits">
        <button class="credit" type="button">Keyboard shortcuts</button>
        <span class="credit">Map data ©2025 GeoBasis-DE/BKG (©2009), Google, Inst. Geogr. Nacional</span>
        <a class="credit" href="#terms">Terms</a>
      </div>
    </div>
    <button class="submit" type="submit">Creating Data Center</button>
  </form>
</main>
</body>
</html>
```
FILE: styles.css
```css
*, *::before, *::after { box-sizing: border-box; }

body {
  margin: 0;
  background: #fff;
  color: #09090b;
  font-family: Inter, "Liberation Sans", sans-serif;
  overflow-x: hidden;
}

h1, h2, p, fieldset, legend { margin: 0; padding: 0; border: 0; }
button { font: inherit; border: 0; padding: 0; cursor: pointer; }

.card {
  margin: 25px -5px -2px 1px;
  padding: 34px 64px 30px;
  border: 1px solid #e4e4e7;
  border-radius: 21px;
  box-shadow: 0 1px 3px rgba(0, 0, 0, .1);
}

.card-header { text-align: center; margin-bottom: 47px; }
.title { font-size: 30px; line-height: 40px; font-weight: 600; }
.subtitle { margin-top: 12px; font-size: 20px; line-height: 28px; color: #71717a; }

.form { display: flex; flex-direction: column; }
.section-title { font-size: 24px; line-height: 32px; font-weight: 600; }
.fields {
  display: grid;
  grid-template-columns: repeat(3, 1fr);
  gap: 27px;
  margin: 39px 0 24px;
}
.field { display: flex; flex-direction: column; gap: 14px; }
.label { font-size: 21px; line-height: 24px; font-weight: 600; }
.input {
  width: 100%;
  height: 53px;
  padding: 0 16px;
  border: 1px solid #e4e4e7;
  border-radius: 13px;
  background: #fff;
  box-shadow: 0 2px 3px rgba(0, 0, 0, .05);
  font: 400 18px/24px Inter, "Liberation Sans", sans-serif;
  color: inherit;
}
.input::placeholder { color: #71717a; opacity: 1; }

.types { margin-top: 3px; }
.type-list { display: flex; flex-direction: column; gap: 27px; margin-top: 16px; }
.type { display: flex; align-items: center; gap: 26px; font-size: 23px; line-height: 32px; }
.radio {
  appearance: none;
  display: grid;
  place-items: center;
  width: 22px;
  height: 22px;
  margin: 0;
  border: 1px solid #e4e4e7;
  border-radius: 50%;
  box-shadow: 0 1px 3px rgba(0, 0, 0, .08);
}
.radio:checked::before { content: ""; width: 10px; height: 10px; border-radius: 50%; background: #447dfc; }

.map-title { margin: 37px 0 13px; }
.map {
  position: relative;
  height: 400px;
  overflow: hidden;
  background: #90d3e6;
  font-family: Roboto, "Liberation Sans", sans-serif;
}
.map-canvas { display: block; width: 100%; height: 100%; }

.land { fill: #c9ecda; }
.hill { fill: #bae7cf; }
.wood { fill: #abe2c2; }
.plain { fill: #f3eee3; }
.dry { fill: #faf7f2; }
.rock { fill: #cbccca; }
.shade { fill: #86ab98; opacity: .2; }
.sea { fill: #90d3e6; }
.lake { fill: #81cbe5; }
.road { fill: none; stroke: #a3b4d6; stroke-width: 6; stroke-linejoin: round; opacity: .7; }
.border { fill: none; stroke: #292b2c; stroke-width: 5; stroke-linejoin: round; }
.disputed { stroke-dasharray: 16 12; }

.names { text-anchor: middle; stroke: #fff; stroke-opacity: .85; stroke-linejoin: round; paint-order: stroke; }
.start { text-anchor: start; }
.end { text-anchor: end; }
.town { font-size: 15px; fill: #45494d; stroke-width: 3px; }
.region { font-style: italic; fill: #26282a; }
.city { font-size: 19px; font-weight: 500; fill: #34373a; stroke-width: 4px; }
.country { font-size: 23px; font-weight: 700; fill: #1c1e20; stroke-width: 4px; }
.small { font-size: 20px; }
.seas { font-size: 15px; fill: #43879d; }
.dots { fill: #f1f1f1; stroke: #505357; stroke-width: 2px; }
.big { stroke: #111; }
.capitals { fill: #fff; stroke: #111; stroke-width: 2px; }
.cores { fill: #111; }
.pin { fill: #d94f3f; stroke: #be3d31; stroke-width: 1px; }
.pin-core { fill: #a4261d; }

.map-types {
  position: absolute;
  left: 14px;
  top: 13px;
  display: flex;
  border-radius: 3px;
  background: #fff;
  box-shadow: 0 1px 5px rgba(0, 0, 0, .3);
}
.map-type { height: 54px; padding: 0 23px; border-radius: 3px; background: #fff; color: #565656; font-size: 24px; }
.map-type.active { color: #000; font-weight: 500; border-right: 1px solid #e6e6e6; }

.control {
  position: absolute;
  right: 14px;
  display: grid;
  place-items: center;
  width: 53px;
  height: 53px;
  border-radius: 3px;
  background: #fff;
  box-shadow: 0 1px 5px rgba(0, 0, 0, .3);
}
.fullscreen { top: 13px; }
.camera { bottom: 127px; border-radius: 50%; }
.pegman { bottom: 32px; }

.logo {
  position: absolute;
  left: 14px;
  bottom: 3px;
  font: 500 23px/30px "Open Sans", sans-serif;
  text-decoration: none;
  text-shadow: 0 0 2px #fff, 0 0 2px #fff, 1px 1px 1px #fff, -1px -1px 1px #fff;
}
.g-blue { color: #4f82ee; }
.g-red { color: #dc4f41; }
.g-yellow { color: #efb93c; }
.g-green { color: #50a75a; }

.credits { position: absolute; right: 0; bottom: 0; display: flex; gap: 1px; }
.credit {
  height: 19px;
  padding: 0 8px;
  background: rgba(245, 245, 245, .75);
  color: #000;
  font-size: 13px;
  line-height: 19px;
  text-decoration: none;
}
.credits .credit { font-size: 13px; letter-spacing: normal; }

.submit {
  align-self: center;
  height: 53px;
  margin-top: 43px;
  padding: 0 32px;
  border-radius: 13px;
  background: #447dfc;
  color: #f8fafc;
  font-size: 21px;
}
```
